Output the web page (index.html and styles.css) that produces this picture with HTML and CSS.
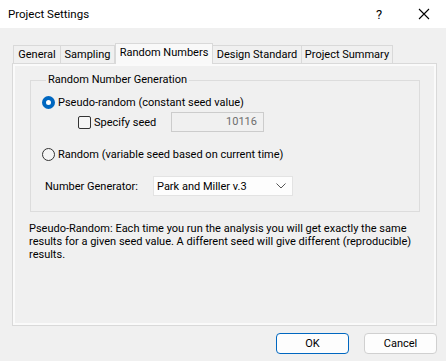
FILE: index.html
```html
<!DOCTYPE html>
<html>
<head>
    <title>Project Settings</title>
    <link rel="stylesheet" href="styles.css">
</head>
<body>
    <div class="dialog">
        <div class="titlebar">
            <span class="title">Project Settings</span>
            <span class="help">?</span>
            <span class="close">
                <svg width="12" height="12" viewBox="0 0 12 12"><path d="M1 1L11 11M11 1L1 11" stroke="#000" stroke-width="1.1" fill="none"/></svg>
            </span>
        </div>
        <div class="content">
            <div class="tabs">
                <div class="tab tab-general">General</div>
                <div class="tab tab-sampling">Sampling</div>
                <div class="tab tab-random active">Random Numbers</div>
                <div class="tab tab-design">Design Standard</div>
                <div class="tab tab-summary">Project Summary</div>
            </div>
            <div class="panel">
                <fieldset class="group">
                    <legend>Random Number Generation</legend>
                    <div class="row">
                        <span class="radio checked"></span>
                        <span>Pseudo-random (constant seed value)</span>
                    </div>
                    <div class="row seed-row">
                        <span class="check"></span>
                        <span class="seed-label">Specify seed</span>
                        <span class="seed-input">10116</span>
                    </div>
                    <div class="row random-row">
                        <span class="radio"></span>
                        <span>Random (variable seed based on current time)</span>
                    </div>
                    <div class="row gen-row">
                        <span class="gen-label">Number Generator:</span>
                        <span class="select">
                            <span>Park and Miller v.3</span>
                            <svg width="10" height="6" viewBox="0 0 10 6"><path d="M0.5 0.5L5 5L9.5 0.5" stroke="#555" stroke-width="1" fill="none"/></svg>
                        </span>
                    </div>
                </fieldset>
                <p class="desc">Pseudo-Random: Each time you run the analysis you will get exactly the same results for a given seed value. A different seed will give different (reproducible) results.</p>
            </div>
            <div class="buttons">
                <span class="btn default">OK</span>
                <span class="btn">Cancel</span>
            </div>
        </div>
    </div>
</body>
</html>
```

FILE: styles.css
```css
* {
    margin: 0;
    padding: 0;
    box-sizing: border-box;
}

body {
    background: #f0f0f0;
    font-family: Roboto, "Liberation Sans", sans-serif;
    font-size: 11px;
    color: #000;
}

.dialog {
    width: 446px;
    height: 361px;
}

.titlebar {
    height: 28px;
    background: #fff;
    display: flex;
    align-items: center;
    padding-left: 8px;
}

.title {
    flex: 1;
    font-size: 11.5px;
}

.help {
    width: 14px;
    text-align: center;
    font-size: 13px;
    margin-right: 32px;
}

.close {
    width: 12px;
    height: 12px;
    margin-right: 16px;
    display: flex;
}

.content {
    padding: 15px 9px 0 12px;
}

.tabs {
    display: flex;
    align-items: flex-end;
    height: 20px;
    padding-left: 1px;
    position: relative;
    z-index: 1;
    white-space: nowrap;
}

.tab {
    height: 18px;
    line-height: 17px;
    text-align: center;
    border: 1px solid #d9d9d9;
    border-bottom: none;
    border-left: none;
    background: #f0f0f0;
}

.tab:first-child {
    border-left: 1px solid #d9d9d9;
}

.tab-general { width: 48px; }
.tab-sampling { width: 54px; }
.tab-random { width: 98px; }
.tab-design { width: 89px; }
.tab-summary { width: 91px; }

.tab.active {
    height: 21px;
    margin-bottom: -1px;
    line-height: 17px;
    background: #f9f9f9;
    border-left: 1px solid #d9d9d9;
}

.panel {
    height: 263px;
    border: 1px solid #d9d9d9;
    box-shadow: inset 0 0 0 2px #fafafa;
    background: #f0f0f0;
    padding: 9px 16px 0 17px;
}

.group {
    border: 1px solid #dcdcdc;
    height: 139px;
    padding: 0 11px;
}

.group legend {
    padding: 0 2px;
    margin-left: 4px;
    line-height: 14px;
}

.row {
    display: flex;
    align-items: center;
    height: 16px;
    white-space: nowrap;
}

.row:first-of-type {
    margin-top: 7px;
}

.radio {
    width: 13px;
    height: 13px;
    border-radius: 50%;
    border: 1px solid #333;
    background: #f5f5f5;
    margin-right: 3px;
    flex: none;
}

.radio.checked {
    border: 4px solid #0067c0;
    background: #fff;
}

.seed-row {
    height: 20px;
    margin-top: 2px;
    padding-left: 36px;
}

.check {
    width: 13px;
    height: 13px;
    border: 1px solid #333;
    border-radius: 2px;
    background: #f5f5f5;
    margin-right: 3px;
}

.seed-label {
    width: 77px;
}

.seed-input {
    width: 93px;
    height: 20px;
    border: 1px solid #cccccc;
    color: #6d6d6d;
    text-align: right;
    padding-right: 6px;
    line-height: 18px;
}

.random-row {
    margin-top: 14px;
}

.gen-row {
    height: 20px;
    margin-top: 14px;
    padding-left: 3px;
}

.gen-label {
    width: 108px;
}

.select {
    width: 140px;
    height: 20px;
    background: #fdfdfd;
    border: 1px solid #e3e3e3;
    display: flex;
    align-items: center;
    justify-content: space-between;
    padding: 0 6px 0 3px;
}

.desc {
    margin-top: 10px;
    margin-left: -1px;
    margin-right: -6px;
    line-height: 13px;
}

.buttons {
    display: flex;
    justify-content: flex-end;
    gap: 15px;
    margin-top: 7px;
}

.btn {
    width: 73px;
    height: 21px;
    border: 1px solid #d0d0d0;
    border-radius: 4px;
    background: #fdfdfd;
    text-align: center;
    line-height: 19px;
}

.btn.default {
    border-color: #0067c0;
}
```
